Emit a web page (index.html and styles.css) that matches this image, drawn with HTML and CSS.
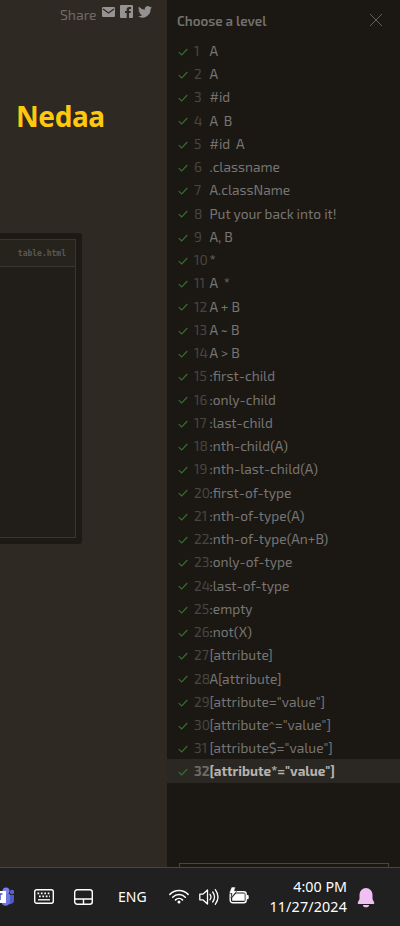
FILE: index.html
```html
<!DOCTYPE html>
<html lang="en">
<head>
<meta charset="utf-8">
<title>Choose a level</title>
<link rel="stylesheet" href="styles.css">
</head>
<body>
<div class="app">
  <main class="game">
    <div class="share">
      <span class="share-label">Share</span>
      <svg width="13" height="10" viewBox="0 0 13 10"><rect width="13" height="10" rx="1.2" fill="#959392"/><path d="M1 2l5.500 4L12 2" fill="none" stroke="#2e2923" stroke-width="1.200"/></svg>
      <svg width="13" height="13" viewBox="0 0 13 13"><path d="M1 0h11a1 1 0 011 1v11a1 1 0 01-1 1H9V8h1.700V6H9V4.800c0-.7.300-.9 1-.9h1V2H9.300C7.500 2 6.700 3 6.700 4.500V6H5v2h1.700v5H1a1 1 0 01-1-1V1a1 1 0 011-1z" fill="#959392"/></svg>
      <svg class="bird" width="14" height="12" viewBox="0 0 24 20"><path d="M24 2.400a10 10 0 01-2.800.8A5 5 0 0023.300.400a10 10 0 01-3.100 1.200 4.900 4.900 0 00-8.400 4.500A14 14 0 011.700 1a4.900 4.900 0 001.500 6.500A5 5 0 011 6.900c0 2.300 1.600 4.400 3.900 4.900a5 5 0 01-2.200.1 4.900 4.900 0 004.600 3.400A10 10 0 010 17.300 14 14 0 0021.500 4.800 10 10 0 0024 2.400z" fill="#959392"/></svg>
    </div>
    <div class="name">Nedaa</div>
    <div class="editor"><div class="pane"><div class="pane-head">table.html</div></div></div>
  </main>
  <aside class="levels">
    <header class="levels-head"><span>Choose a level</span>
      <svg width="14" height="14" viewBox="0 0 14 14"><path d="M1 1l12 12M13 1L1 13" stroke="#62605d" stroke-width="1"/></svg>
    </header>
    <ol class="list" id="list"></ol>
    <div class="reset"></div>
  </aside>
</div>
<footer class="taskbar">
  <svg class="teams" width="14" height="20" viewBox="0 0 14 20"><circle cx="12" cy="5" r="2.200" fill="#5b62c9"/><circle cx="6" cy="4" r="3.500" fill="#7b83eb"/><path d="M9 8h5v6a4 4 0 01-5 3z" fill="#5059c9"/><path d="M0 7h10v7a4.500 4.500 0 01-8 3z" fill="#6e76df"/><path d="M0 4h6v12H0z" fill="#fff"/><path d="M0 7h2.500M0 7v6" stroke="#4b53bc" stroke-width="1.500"/></svg>
  <svg class="keyboard" width="20" height="15" viewBox="0 0 20 15" fill="none" stroke="#fff"><rect x=".7" y=".7" width="18.600" height="13.600" rx="2" stroke-width="1.400"/><path d="M3.500 4.300h13M5 7.300h11" stroke-width="1.700" stroke-dasharray="1.700 1.700"/><path d="M4 10.800h12" stroke-width="1.300"/></svg>
  <svg class="touchpad" width="19" height="16" viewBox="0 0 19 16" fill="none" stroke="#fff" stroke-width="1.400"><rect x=".7" y=".7" width="17.600" height="14.600" rx="2.500"/><path d="M1 10h17M9.500 10v5"/></svg>
  <span class="lang">ENG</span>
  <svg class="wifi" width="20" height="15" viewBox="0 0 20 15" fill="none" stroke="#fff" stroke-width="1.500" stroke-linecap="round"><path d="M.9 5.400a12.800 12.800 0 0118.200 0M3.700 8.200a8.900 8.900 0 0112.600 0M6.500 10.900a5 5 0 017 0"/><circle cx="10" cy="13" r="1.500" fill="#fff" stroke="none"/></svg>
  <svg class="sound" width="20" height="18" viewBox="0 0 20 18" fill="none" stroke="#fff" stroke-width="1.300" stroke-linejoin="round" stroke-linecap="round"><path d="M.8 6.200h3L8.500 2v14l-4.700-4.200h-3z"/><path d="M11 6.300q2 2.700 0 5.400M13.700 4q3.600 5 0 10M16.300 1.700q5.400 7.300 0 14.600"/></svg>
  <svg class="battery" width="20" height="17" viewBox="0 0 20 17"><rect x="1.200" y="4.700" width="16" height="11" rx="2.500" fill="none" stroke="#fff" stroke-width="1.400"/><path d="M7 6.500h8.700v7.300H3.200v-3z" fill="#fff"/><path d="M17.500 8h1.200a1 1 0 011 1v2.300a1 1 0 01-1 1h-1.200z" fill="#fff"/><path d="M2.500 0h4L5.500 3.700H8L2 11l1-4.500H0z" fill="#fff" stroke="#202020" stroke-width=".6"/></svg>
  <div class="clock"><div>4:00 PM</div><div class="date">11/27/2024</div></div>
  <svg class="bell" width="18" height="20" viewBox="0 0 18 20" fill="#f0c0f5"><path d="M9 0a6.500 6.500 0 016.500 6.500V11l1.700 3.600c.3.700 0 1.400-.8 1.400H1.600c-.8 0-1.100-.7-.8-1.400L2.500 11V6.500A6.500 6.500 0 019 0z"/><path d="M6 17h6a3 2.300 0 01-6 0z"/></svg>
</footer>
<script src="levels.js"></script>
</body>
</html>
```
FILE: styles.css
```css
* { box-sizing: border-box; }
body { margin: 0; width: 400px; height: 926px; overflow: hidden; background: #2e2923; font-family: "Exo 2", "Noto Sans", sans-serif; }
svg { display: block; flex: none; }
.app { display: flex; height: 867px; overflow: hidden; }
.game { width: 167px; background: #2e2923; flex: none; }
.share { display: flex; align-items: flex-start; height: 102px; padding: 5px 0 0 60px; }
.share svg { margin-right: 5px; }
.share svg:nth-of-type(1) { margin-top: 2px; }
.share .bird { margin: 1px 0 0; }
.share-label { width: 42px; font-size: 14px; line-height: 20px; color: #6e6b67; flex: none; }
.name { height: 131px; padding-left: 16px; font: bold 28px/28px "Noto Sans", sans-serif; letter-spacing: -.4px; color: #ffc80e; }
.editor { width: 82px; height: 311px; padding: 6px 6px 6px 0; background: #1d1a15; border-radius: 0 3px 3px 0; }
.pane { height: 299px; background: #211e19; border: 1px solid #383631; border-left: 0; }
.pane-head { height: 27px; padding-right: 9px; background: #26231d; border-bottom: 1px solid #383631; font: bold 8px/27px "DejaVu Sans Mono", monospace; color: #5b5955; text-align: right; }
.levels { width: 233px; background: #1b1813; }
.levels-head { display: flex; justify-content: space-between; height: 38.5px; padding: 11px 17px 0 10px; font-size: 13.4px; font-weight: 600; line-height: 20px; color: #73716e; }
.levels-head svg { margin-top: 2px; }
.list { list-style: none; margin: 0; padding: 0; }
.level { display: flex; align-items: center; height: 23.25px; padding-left: 11px; font-size: 13.75px; line-height: 23px; white-space: pre; color: #777573; }
.level svg { margin: 3px 6px 0 0; }
.level span { padding-top: .4px; }
.number { width: 15.5px; color: #484642; flex: none; }
.current { background: #2b2823; font-weight: bold; font-size: 13.5px; color: #b5b3b0; }
.current .number { color: #6d6a66; }
.reset { width: 210px; height: 35px; margin: 80px 0 0 12px; border: 1px solid #494743; }
.taskbar { display: flex; align-items: flex-start; height: 59px; background: #202020; border-top: 1px solid #474542; color: #fff; font-family: "Noto Sans", sans-serif; }
.teams { margin-top: 19px; }
.keyboard { margin: 21px 0 0 20px; }
.touchpad { margin: 21px 0 0 20px; }
.lang { width: 29px; margin: 19px 0 0 25px; font-size: 14px; line-height: 20px; }
.wifi { margin: 21px 0 0 22px; }
.sound { margin: 20px 0 0 10px; }
.battery { margin: 19px 0 0 10px; }
.clock { width: 98px; margin-top: 9px; font-size: 14.3px; line-height: 20px; text-align: right; white-space: nowrap; }
.date { letter-spacing: .15px; }
.bell { margin: 20px 0 0 10px; }
```
FILE: levels.js
```js
const levels = [
  "A", "A", "#id", "A  B", "#id  A", ".classname", "A.className",
  "Put your back into it!", "A, B", "*", "A  *", "A + B", "A ~ B", "A > B",
  ":first-child", ":only-child", ":last-child", ":nth-child(A)",
  ":nth-last-child(A)", ":first-of-type", ":nth-of-type(A)",
  ":nth-of-type(An+B)", ":only-of-type", ":last-of-type", ":empty", ":not(X)",
  "[attribute]", "A[attribute]", "[attribute=\"value\"]",
  "[attribute^=\"value\"]", "[attribute$=\"value\"]", "[attribute*=\"value\"]"
];
const tick = '<svg width="10" height="8" viewBox="0 0 10 8"><path d="M.7 4.200L3.700 7 9.300 1" fill="none" stroke="#347030" stroke-width="1.100"/></svg>';
const list = document.getElementById("list");

levels.forEach((label, index) => {
  const row = document.createElement("li");
  row.className = index === levels.length - 1 ? "level current" : "level";
  row.innerHTML = tick + '<span class="number"></span><span class="label"></span>';
  row.querySelector(".number").textContent = index + 1;
  row.querySelector(".label").textContent = label;
  list.append(row);
});
```
